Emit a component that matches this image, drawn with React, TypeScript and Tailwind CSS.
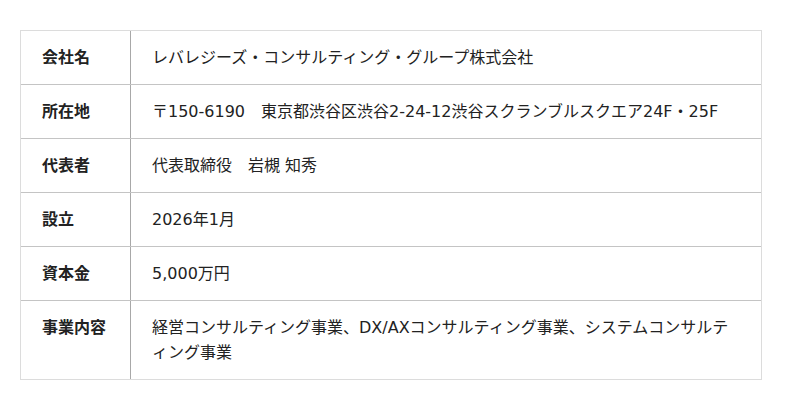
const rows: { label: string; value: string }[] = [
  { label: "会社名", value: "レバレジーズ・コンサルティング・グループ株式会社" },
  { label: "所在地", value: "〒150-6190　東京都渋谷区渋谷2-24-12渋谷スクランブルスクエア24F・25F" },
  { label: "代表者", value: "代表取締役　岩槻 知秀" },
  { label: "設立", value: "2026年1月" },
  { label: "資本金", value: "5,000万円" },
  {
    label: "事業内容",
    value: "経営コンサルティング事業、DX/AXコンサルティング事業、システムコンサルティング事業",
  },
];

export default function App() {
  return (
    <main className="w-[800px] h-[410px] bg-white pt-[30px] pl-[20px] font-['DejaVu_Sans','Noto_Sans_CJK_JP',sans-serif] text-[16px] text-[#222]">
      <div className="w-[742px] border border-[#dcdcdc]">
        {rows.map((r, i) => (
          <div
            key={r.label}
            className={`flex ${i < rows.length - 1 ? "border-b border-[#c4c4c4]" : ""}`}
          >
            <div className="w-[110px] shrink-0 border-r border-[#a8a8a8] pl-[21px] py-[14px] leading-[25px] font-bold">
              {r.label}
            </div>
            <div className="flex-1 pl-[21px] pr-[26px] py-[14px] leading-[25px]">{r.value}</div>
          </div>
        ))}
      </div>
    </main>
  );
}
